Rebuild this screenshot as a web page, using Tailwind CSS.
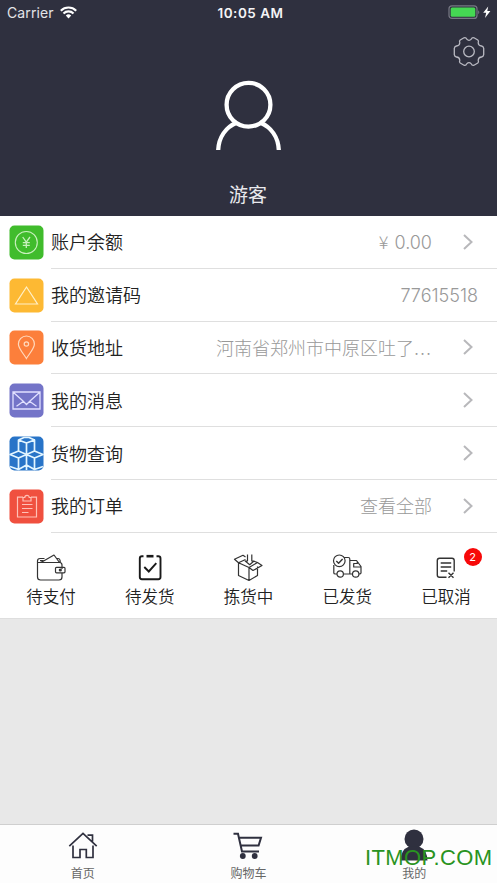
<!DOCTYPE html>
<html lang="zh-CN">
<head>
<meta charset="utf-8">
<title>我的</title>
<script src="https://cdn.jsdelivr.net/npm/@tailwindcss/browser@4"></script>
</head>
<body class="bg-white">
<div class="flex h-[883px] w-[497px] flex-col overflow-hidden bg-[#e8e8e8] font-['Inter','Noto_Sans_CJK_SC',sans-serif] text-[#222]">
  <header class="h-[216px] shrink-0 bg-[#2f303f] text-white">
    <div class="grid h-[26px] grid-cols-3 items-center">
      <div class="flex items-center pl-[7px] text-[14px] text-[#e4e4e8]">
        <span class="-mt-[2px] w-[47px] tracking-[0.1px]">Carrier</span>
        <svg class="-mt-[2px] ml-[6px]" width="17" height="13" viewBox="0 0 17 13" fill="none" stroke="#fff" stroke-width="2.1"><path d="M.8 4.7a10.9 10.9 0 0 1 15.4 0M3.5 7.5a7 7 0 0 1 10 0"/><path d="M8.5 12.4 5.8 9.6a3.8 3.8 0 0 1 5.4 0z" fill="#fff" stroke="none"/></svg>
      </div>
      <div class="text-center text-[13.500px] font-semibold tracking-[0.5px] whitespace-nowrap text-[#f4f4f6]"><span class="pl-[4px]">10:05 AM</span></div>
      <div class="-mt-[2px] flex items-center justify-end pr-[5px]">
        <svg width="45" height="16" viewBox="0 0 45 16"><rect x="2" y="1.8" width="28" height="12.6" rx="3" fill="none" stroke="#777884" stroke-width="1.2"/><rect x="3.7" y="3.5" width="24.6" height="9.2" rx="1.5" fill="#45d853"/><path d="M31.2 6.2q2.2 1.8 0 4z" fill="#777884"/><path d="m41.2 2.4-5 6.4h3l-1.2 5.3 5.4-7h-3.1z" fill="#fff"/></svg>
      </div>
    </div>
    <div class="flex h-[52px] justify-end pt-[9px] pr-[11px]">
      <svg width="34" height="34" viewBox="0 0 34 34" fill="none" stroke="#b9b9c2" stroke-width="1.3" stroke-linejoin="round"><circle cx="17" cy="16.5" r="5.3"/><path d="M12 2.8Q14 2.2 14.7 4.1Q17 6.5 19.3 4.1Q20 2.2 22 2.8L25.8 5Q27 6 26.2 7.8Q26.5 11.1 29.6 11Q31.4 11.3 31.7 13.3V19.7Q31.4 21.7 29.6 22Q26.5 21.9 26.2 25.2Q27 27 25.8 28L22 30.2Q20 30.8 19.3 28.9Q17 26.5 14.7 28.9Q14 30.8 12 30.2L8.2 28Q7 27 7.8 25.2Q7.5 21.9 4.4 22Q2.6 21.7 2.3 19.7V13.3Q2.6 11.3 4.4 11Q7.5 11.1 7.8 7.8Q7 6 8.2 5Z"/></svg>
    </div>
    <div class="flex flex-col items-center">
      <svg width="68" height="76" viewBox="0 0 68 76" fill="none" stroke="#fff" stroke-width="4.3"><circle cx="33.5" cy="26.700" r="21.9"/><path d="M3.200 72C3.800 59.500 10.500 49.300 22 44.500M63.800 72C63.200 59.500 56.500 49.300 45 44.500"/></svg>
      <div class="mt-[27px] -ml-[1px] text-[19px] leading-[30px] text-[#e9e9ed]">游客</div>
    </div>
  </header>

  <main class="shrink-0 bg-white">
    <ul class="h-[317px] text-[18px]">
      <li class="flex h-[52.8px] items-center pl-[9px]">
        <svg class="shrink-0" width="35" height="35" viewBox="0 0 35 35" fill="none" stroke="#c9f0be" stroke-width="1.1"><rect x=".5" y=".5" width="34" height="34" rx="5" fill="#40bc2c" stroke="none"/><circle cx="17.3" cy="17.5" r="11"/><path d="m13.7 12 3.6 5.2L21 12M17.3 17.2V23M13.8 17.6h7M13.8 20.3h7" stroke-width="1.3"/></svg>
        <div class="ml-[7px] flex h-full flex-1 items-center border-b border-[#dfdfdf]"><span class="pt-[2px] font-[350]">账户余额</span><span class="mr-[30px] ml-auto font-light text-[#999]"><span class="mr-[1px] font-['Noto_Sans_CJK_SC']">¥</span> 0.00</span><svg class="mr-[22px]" width="13" height="18" viewBox="0 0 13 18" fill="none" stroke="#b8b8bb" stroke-width="2"><path d="m2 2 7.5 7L2 16"/></svg></div>
      </li>
      <li class="flex h-[52.8px] items-center pl-[9px]">
        <svg class="shrink-0" width="35" height="35" viewBox="0 0 35 35"><rect x=".5" y=".5" width="34" height="34" rx="5" fill="#fdb933"/><path d="M17.5 9 28.5 26h-22z" fill="none" stroke="#fff0c8" stroke-width="1.2"/></svg>
        <div class="ml-[7px] flex h-full flex-1 items-center border-b border-[#dfdfdf]"><span class="pt-[2px] font-[350]">我的邀请码</span><span class="mr-[19px] ml-auto pt-px font-light text-[#999]">77615518</span></div>
      </li>
      <li class="flex h-[52.8px] items-center pl-[9px]">
        <svg class="shrink-0" width="35" height="35" viewBox="0 0 35 35" fill="none" stroke="#ffd9bd" stroke-width="1.2"><rect x=".5" y=".5" width="34" height="34" rx="5" fill="#fc7f3b" stroke="none"/><path d="M17.4 28.5C14.4 23.5 9.4 18.5 9.4 14a8 8 0 0 1 16 0c0 4.500-5 9.500-8 14.500z"/><circle cx="17.400" cy="14" r="2.200"/></svg>
        <div class="ml-[7px] flex h-full flex-1 items-center border-b border-[#dfdfdf]"><span class="pt-[2px] font-[350]">收货地址</span><span class="mr-[30px] ml-auto pt-[2px] font-light text-[#999]">河南省郑州市中原区吐了<span class="tracking-[0.9px]">...</span></span><svg class="mr-[22px]" width="13" height="18" viewBox="0 0 13 18" fill="none" stroke="#b8b8bb" stroke-width="2"><path d="m2 2 7.5 7L2 16"/></svg></div>
      </li>
      <li class="flex h-[52.8px] items-center pl-[9px]">
        <svg class="shrink-0" width="35" height="35" viewBox="0 0 35 35" fill="none" stroke="#e1e0ff" stroke-width="1.3"><rect x=".5" y=".5" width="34" height="34" rx="5" fill="#7474c8" stroke="none"/><path d="M4 9h27v17H4zM4.500 9.500l9.500 8.500 3.500 3.500 3.500-3.500 9.500-8.500M14.500 18.200l-7 5M20.500 18.200l7 5"/></svg>
        <div class="ml-[7px] flex h-full flex-1 items-center border-b border-[#dfdfdf]"><span class="pt-[2px] font-[350]">我的消息</span><svg class="mr-[22px] ml-auto" width="13" height="18" viewBox="0 0 13 18" fill="none" stroke="#b8b8bb" stroke-width="2"><path d="m2 2 7.5 7L2 16"/></svg></div>
      </li>
      <li class="flex h-[52.8px] items-center pl-[9px]">
        <svg class="shrink-0" width="35" height="35" viewBox="0 0 35 35" fill="none" stroke="#e2f5ff" stroke-width="1.700" stroke-linejoin="round"><rect x=".5" y=".5" width="34" height="34" rx="5" fill="#2874c8" stroke="none"/><path d="M9.500 4 17.500 7 25.500 4V15L17.500 18.500 9.500 15ZM17.500 7V34M9.500 4 15 1.500H20L25.500 4M1 18.500 9.500 15 17.500 18.500 9.500 22ZM17.500 18.500 25.500 15 34 18.500 25.500 22ZM9.500 22V33.500M25.500 22V33.500M1 30.500 9.500 33.500 17.500 29 25.500 33.500 34 30.500"/></svg>
        <div class="ml-[7px] flex h-full flex-1 items-center border-b border-[#dfdfdf]"><span class="pt-[2px] font-[350]">货物查询</span><svg class="mr-[22px] ml-auto" width="13" height="18" viewBox="0 0 13 18" fill="none" stroke="#b8b8bb" stroke-width="2"><path d="m2 2 7.5 7L2 16"/></svg></div>
      </li>
      <li class="flex h-[52.8px] items-center pl-[9px]">
        <svg class="shrink-0" width="35" height="35" viewBox="0 0 35 35" fill="none" stroke="#ffc1b7" stroke-width="1.200"><rect x=".5" y=".5" width="34" height="34" rx="5" fill="#f0503f" stroke="none"/><path d="M14 8.200H8.500V28H27.500V8.200H22M14 12V8.500h1.800a2.200 2.200 0 0 1 4.400 0H22V12ZM13 15.500h10.500M13 19.500h10.500M13 23.500h6.500"/></svg>
        <div class="ml-[7px] flex h-full flex-1 items-center border-b border-[#dfdfdf]"><span class="pt-[2px] font-[350]">我的订单</span><span class="mr-[30px] ml-auto pt-[2px] font-light text-[#999]">查看全部</span><svg class="mr-[22px]" width="13" height="18" viewBox="0 0 13 18" fill="none" stroke="#b8b8bb" stroke-width="2"><path d="m2 2 7.5 7L2 16"/></svg></div>
      </li>
    </ul>

    <nav class="grid h-[86px] grid-cols-5 border-b border-[#dedede] px-[1.5px] pt-[20px] text-[16.500px] leading-[24px] font-[350]">
      <div class="flex flex-col items-center">
        <svg width="32" height="32" viewBox="0 0 32 32" fill="none" stroke="#333" stroke-width="1.200" stroke-linejoin="round"><path d="M27 16V12Q27 9.500 24.500 9.500H2.500V24Q2.500 27 5.500 27H24Q27 27 27 24V20M2.500 10V8Q2.500 5.500 5 5.500H9.500M6 9.500 19 2 24.500 9.500M21.500 5.500H23Q25.300 5.500 25.300 9.500M5 7.700H8.500"/><rect x="20.500" y="14.300" width="9.500" height="5.500" rx="1"/><circle cx="25.300" cy="17" r="1" fill="#333"/></svg>
        <span>待支付</span>
      </div>
      <div class="flex flex-col items-center">
        <svg width="32" height="32" viewBox="0 0 32 32" fill="none" stroke="#1a1a1a" stroke-width="1.900"><path d="M9.500 3.300H8Q5.800 3.300 5.800 5.500V24Q5.800 26.200 8 26.200H24.300Q26.500 26.200 26.500 24V5.500Q26.500 3.300 24.300 3.300H22.500"/><path d="M12.500 3.200h7" stroke-width="2.600"/><path d="m10.300 14 4.500 4.500 7.500-8.300"/></svg>
        <span>待发货</span>
      </div>
      <div class="flex flex-col items-center">
        <svg width="32" height="32" viewBox="0 0 32 32" fill="none" stroke="#333" stroke-width="1.200" stroke-linejoin="round"><path d="M6.500 10V22.500L17 27.500 25.500 22.500V13.500M17 14.500V27.500M6.500 9.800 17 14.500 21 17.500 30 12.500 25.500 9.500 17 14.500M6.500 9.800 2.500 6.200 11 2.300 13.500 4M6.500 9.800 13.500 6.500M22 8.200 25.500 9.500M15.500 1.500V8H13.200L17.700 11.700 22 8H19.800V1.500"/></svg>
        <span>拣货中</span>
      </div>
      <div class="flex flex-col items-center">
        <svg width="32" height="32" viewBox="0 0 32 32" fill="none" stroke="#333" stroke-width="1.200" stroke-linejoin="round"><circle cx="8.300" cy="7.800" r="5.800"/><path d="m5.300 8 2.300 2.300 4-4.300" stroke-width="1.400"/><path d="M13 4.500H17.300Q18.800 4.500 18.800 6V21M2.800 12V20Q2.800 21 4.500 21H6M12.500 21H21.500M18.800 7.500H25.500L30 13.500V20Q30 21 28 21M26.300 8.500V10.500H22.700V14H30"/><circle cx="9.200" cy="21" r="3.200"/><circle cx="24.700" cy="21" r="3.200"/></svg>
        <span>已发货</span>
      </div>
      <div class="relative flex flex-col items-center">
        <svg width="32" height="32" viewBox="0 0 32 32" fill="none" stroke="#333" stroke-width="1.400"><path d="M16.500 24.300H9.500Q7.300 24.300 7.300 22V7.500Q7.300 5.200 9.500 5.200H22Q24.200 5.200 24.200 7.500V18.500M10.700 10h10.500M10.700 14h10.500M10.700 18h6.500M18.500 19.800l5 5M23.500 19.800l-5 5"/></svg>
        <span>已取消</span>
        <span class="absolute top-[-5px] left-[67px] size-[18px] rounded-full bg-[#f70909] text-center text-[11px] leading-[18px] font-normal text-white">2</span>
      </div>
    </nav>
  </main>

  <footer class="relative mt-auto grid h-[59px] shrink-0 grid-cols-3 border-t border-[#cfcfcf] bg-[#fdfdfd] pt-[4px] text-[12px] leading-[18px] text-[#666]">
    <div class="flex flex-col items-center">
      <svg class="mb-[2px]" width="32" height="34" viewBox="0 0 32 34" fill="none" stroke="#2f303f" stroke-width="1.700"><path d="M2.300 17.200 16 4.500 29.700 17.200M6 16.500V28.500H13V20.500H19.300V28.500H26V16.500M20.500 6.200H25.500V12.500"/></svg>
      <span>首页</span>
    </div>
    <div class="flex flex-col items-center">
      <svg class="mb-[2px]" width="32" height="34" viewBox="0 0 32 34" fill="none" stroke="#2f303f" stroke-width="2"><path d="M1.500 4.700H6L10 22.500H27M7.200 8.800H29L26.600 16.500H9"/><circle cx="10.800" cy="27" r="2.900" fill="#2f303f" stroke="none"/><circle cx="22.700" cy="27" r="2.900" fill="#2f303f" stroke="none"/></svg>
      <span>购物车</span>
    </div>
    <div class="flex flex-col items-center">
      <svg class="mb-[2px]" width="32" height="34" viewBox="0 0 32 34" fill="#2f303f"><circle cx="16" cy="10" r="9.500"/><path d="M2.500 31.500Q3 20.500 11 17.500H21Q29 20.500 29.500 31.500Z"/></svg>
      <span>我的</span>
    </div>
    <div class="absolute top-[19px] left-[365px] font-['Liberation_Sans',sans-serif] text-[22px] leading-[28px] tracking-[0.35px] whitespace-nowrap text-[#299321]">ITMOP.COM</div>
  </footer>
</div>
</body>
</html>
